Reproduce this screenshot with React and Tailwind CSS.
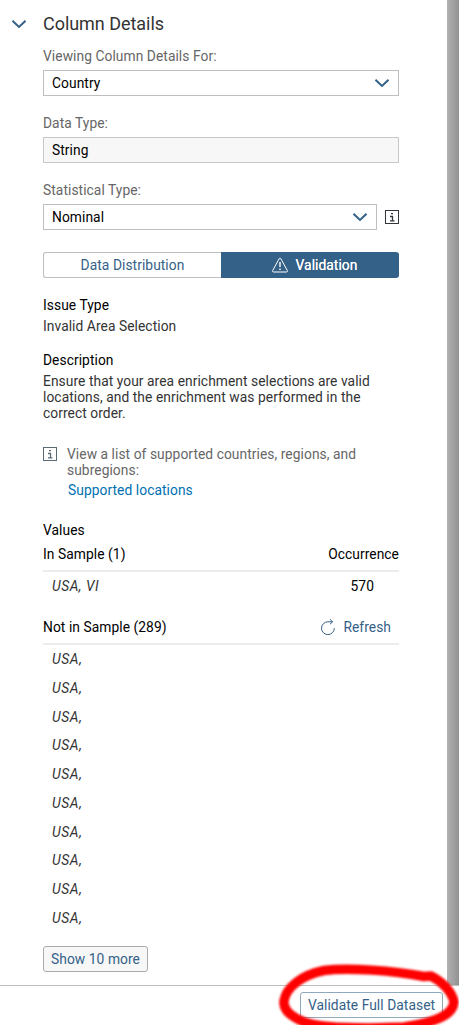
import React from "react";

function Chevron() {
  return (
    <svg className="h-2 w-3.5 shrink-0" viewBox="0 0 14 8" fill="none">
      <path d="M0.5 0.8 L7 7 L13.5 0.8" stroke="#346187" strokeWidth="1.9" />
    </svg>
  );
}

function Info({ color }) {
  return (
    <svg className="size-3.5 shrink-0" viewBox="0 0 14 14" fill="none">
      <rect x="0.5" y="0.5" width="13" height="13" stroke={color} />
      <path d="M6 3.7h2M5 6.5h2.5v4M5 10.9h4.5" stroke={color} strokeWidth="1.3" />
    </svg>
  );
}

const values = Array.from({ length: 10 }, (_, i) => i);

export default function App() {
  return (
    <div className="relative flex h-[1025px] w-[459px] flex-col overflow-hidden bg-white font-['Roboto',sans-serif] text-[13.8px] leading-4 tracking-[0.06px] text-black">
      <div className="flex h-[985px]">
        <div className="flex w-[447px] flex-col pr-12 pl-[43px]">
          <div className="-ml-[31px] flex h-12 items-center gap-[17px] text-[18px] leading-6 tracking-[-0.04px] text-[#333]">
            <Chevron />
            <h1>Column Details</h1>
          </div>
          <div className="h-[22px] text-[#666]">Viewing Column Details For:</div>
          <div className="flex h-[26px] items-center justify-between border border-[#bfbfbf] pr-[9px] pl-2">
            <span>Country</span>
            <Chevron />
          </div>
          <div className="mt-[19px] h-[22px] text-[#666]">Data Type:</div>
          <div className="flex h-[26px] items-center border border-[#c8c8c8] bg-[#f7f7f7] px-2">String</div>
          <div className="mt-[19px] h-[22px] text-[#666]">Statistical Type:</div>
          <div className="flex items-center gap-2">
            <div className="flex h-[26px] w-[334px] items-center justify-between border border-[#bfbfbf] pr-[9px] pl-2">
              <span>Nominal</span>
              <Chevron />
            </div>
            <Info color="#32363a" />
          </div>
          <div className="mt-[22px] flex h-[26px]">
            <div className="flex w-[178px] items-center justify-center rounded-l-[3px] border border-r-0 border-[#bfbfbf] text-[#346187]">
              Data Distribution
            </div>
            <div className="flex w-[178px] items-center justify-center gap-2 rounded-r-[3px] bg-[#346187] pl-[9px] text-white">
              <svg className="h-4 w-4" viewBox="0 0 16 16" fill="none" stroke="white" strokeLinejoin="round">
                <path d="M8 1 Q8.5 1 9 2 L15.3 13.5 Q15.8 15 14.5 15 H1.5 Q0.2 15 0.7 13.5 L7 2 Q7.5 1 8 1Z" />
                <path d="M8 5v5M8 11.5v1.5" strokeWidth="1.4" />
              </svg>
              <span className="[text-shadow:0_0_0.5px_white]">Validation</span>
            </div>
          </div>
          <div className="mt-[19px]">Issue Type</div>
          <div className="mt-[5px] text-[#333]">Invalid Area Selection</div>
          <div className="mt-[18px]">Description</div>
          <div className="mt-[5px] whitespace-nowrap text-[#333]">
            Ensure that your area enrichment selections are valid<br />
            locations, and the enrichment was performed in the<br />
            correct order.
          </div>
          <div className="mt-[25px] flex gap-2.5 text-[#666]">
            <div className="pt-px"><Info color="#5a6b75" /></div>
            <div className="whitespace-nowrap">
              View a list of supported countries, regions, and<br />
              subregions:
            </div>
          </div>
          <div className="mt-1 pl-[25px] text-[#0070b1]">Supported locations</div>
          <div className="mt-6">Values</div>
          <div className="mt-2 flex h-[26px] justify-between border-b-2 border-[#ececec]">
            <span>In Sample (1)</span>
            <span>Occurrence</span>
          </div>
          <div className="mt-1.5 flex justify-between pr-[25px] pl-[9px]">
            <span className="tracking-[0.5px] text-[#333] italic">USA, VI</span>
            <span>570</span>
          </div>
          <div className="mt-[25px] flex h-[26px] justify-between border-b-2 border-[#ececec]">
            <span>Not in Sample (289)</span>
            <div className="flex h-4 items-center gap-2 pr-2 text-[#346187]">
              <svg className="h-4 w-3.5" viewBox="0 0 14 16" fill="none" stroke="#346187">
                <path d="M13.3 9.2A6.4 6.4 0 1 1 6.9 2.8H11.5M9 .3l2.6 2.5L9 5.2" />
              </svg>
              <span>Refresh</span>
            </div>
          </div>
          <div className="flex h-[288px] flex-col pl-[9px] tracking-[0.6px] text-[#333] italic">
            {values.map((v) => (
              <div key={v} className="h-[28.75px] pt-1.5">USA,</div>
            ))}
          </div>
          <button className="mt-[13px] flex h-[26px] w-[105px] items-center justify-center rounded-[3px] border border-[#ababab] bg-[#f7f7f7] text-[#346187]">
            Show 10 more
          </button>
        </div>
        <div className="w-3 bg-linear-to-r from-[#b1b1b1] to-[#929292]" />
      </div>
      <div className="flex h-10 justify-end border-t border-[#bfbfbf] bg-white pt-1.5 pr-4">
        <button className="flex h-[26px] w-[143px] items-center justify-center rounded-[3px] border border-[#8fa9be] text-[#346187]">
          Validate Full Dataset
        </button>
      </div>
      <svg className="absolute top-[945px] left-[259px] h-20 w-[200px]" viewBox="0 0 200 80" fill="none">
        <path className="blur-[0.8px]" d="M110 83C85 83 58 82 45 77C33 72 24 66 25 56C27 42 43 30 65 25.500C90 22 135 26 165 31.500L172 31C182 36 193 46 195 57C194 69 180 77 145 82Z" stroke="#ff0000" strokeWidth="9.500" strokeLinejoin="round" />
      </svg>
    </div>
  );
}
